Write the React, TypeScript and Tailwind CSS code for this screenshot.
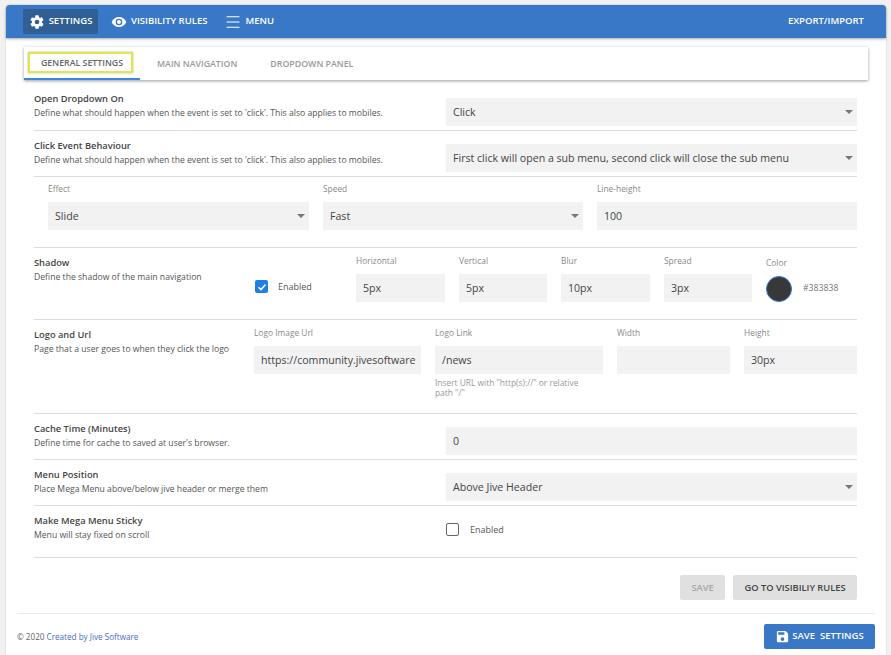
import { Menu } from "lucide-react";

const font = "font-['Open_Sans',sans-serif]";

function Select({ value, className = "" }: { value: string; className?: string }) {
  return (
    <div className={`relative flex h-[28px] items-center bg-[#f2f2f2] pl-[7px] pr-[10px] pt-[2px] text-[10.6px] text-[#444] ${className}`}>
      {value}
      <span className="absolute right-[4px] top-[12px] h-0 w-0 border-x-[4px] border-t-[4px] border-x-transparent border-t-[#777]" />
    </div>
  );
}

function Input({ value = "", className = "" }: { value?: string; className?: string }) {
  return (
    <div className={`flex h-[28px] items-center overflow-hidden whitespace-nowrap bg-[#f2f2f2] pl-[7px] pt-[2px] text-[10.6px] text-[#444] ${className}`}>
      {value}
    </div>
  );
}

function Heading({ title, desc }: { title: string; desc: string }) {
  return (
    <div>
      <div className="text-[9.3px] font-semibold leading-[14px] text-[#444]">{title}</div>
      <div className="text-[8.65px] leading-[14px] text-[#555]">{desc}</div>
    </div>
  );
}

function Label({ children }: { children: string }) {
  return <div className="h-[13px] text-[8.4px] leading-[13px] text-[#8a8a8a]">{children}</div>;
}

function Field({ label, value, className = "" }: { label: string; value?: string; className?: string }) {
  return (
    <div className={className}>
      <Label>{label}</Label>
      <Input value={value} className="mt-[7px]" />
    </div>
  );
}

const clickDesc = "Define what should happen when the event is set to 'click'. This also applies to mobiles.";

export default function App() {
  return (
    <div className={`${font} h-[655px] w-[891px] overflow-hidden bg-[#f1f1f1] pl-[6px] pr-[5px] pt-[5px]`}>
      <div className="h-[650px] rounded-t-[4px] bg-white shadow-[0_0_1px_rgba(0,0,0,0.4)]">
        {/* Top bar */}
        <div className="flex h-[33px] items-center justify-between rounded-t-[4px] bg-[#3878c7] pl-[17px] pr-[22px] text-[9.5px] font-semibold text-white shadow-[0_1px_3px_rgba(0,0,0,0.35)]">
          <div className="flex items-center">
            <div className="flex h-[25px] w-[75px] items-center justify-center gap-[4px] rounded-[2px] bg-[#2f5f94]">
              <svg width="16" height="16" viewBox="0 0 24 24" fill="#fff">
                <path d="M19.4 13c.04-.33.1-.66.1-1s-.06-.67-.1-1l2.1-1.65a.5.5 0 0 0 .12-.64l-2-3.46a.5.5 0 0 0-.6-.22l-2.5 1a7.3 7.3 0 0 0-1.7-1l-.37-2.65A.5.5 0 0 0 14 2h-4a.5.5 0 0 0-.5.42L9.13 5.07c-.6.25-1.17.6-1.7 1l-2.5-1a.5.5 0 0 0-.6.22l-2 3.46a.5.5 0 0 0 .12.64L4.55 11c-.04.33-.05.66-.05 1s.01.67.05 1l-2.1 1.65a.5.5 0 0 0-.12.64l2 3.46c.12.22.38.3.6.22l2.5-1c.53.4 1.1.75 1.7 1l.37 2.65c.04.24.25.42.5.42h4c.25 0 .46-.18.5-.42l.37-2.65c.6-.25 1.17-.6 1.7-1l2.5 1c.22.08.48 0 .6-.22l2-3.46a.5.5 0 0 0-.12-.64zM12 15.5a3.5 3.5 0 1 1 0-7 3.5 3.5 0 0 1 0 7z" />
              </svg>
              SETTINGS
            </div>
            <div className="ml-[13px] flex items-center gap-[4px]">
              <svg width="16" height="16" viewBox="0 0 24 24" fill="#fff">
                <path d="M12 4.5C7 4.5 2.7 7.6 1 12c1.7 4.4 6 7.5 11 7.5s9.3-3.1 11-7.5c-1.7-4.4-6-7.5-11-7.5zM12 17a5 5 0 1 1 0-10 5 5 0 0 1 0 10zm0-8a3 3 0 1 0 0 6 3 3 0 0 0 0-6z" />
              </svg>
              VISIBILITY RULES
            </div>
            <div className="ml-[17px] flex items-center gap-[3px]">
              <Menu size={18} strokeWidth={1.5} />
              MENU
            </div>
          </div>
          <div>EXPORT/IMPORT</div>
        </div>

        {/* Tabs */}
        <div className="ml-[18px] mt-[9px] flex h-[33px] w-[844px] bg-white text-[8.8px] font-semibold text-[#9a9a9a] shadow-[0_1px_3px_rgba(0,0,0,0.4)]">
          <div className="relative flex h-[33px] w-[116px] items-center justify-center border-b-2 border-[#3f86dc] pt-[2px] text-[#666]">
            GENERAL SETTINGS
            <span className="absolute left-[4px] top-[5px] h-[21px] w-[105px] border-2 border-[#e3e64a] shadow-[0_0_2px_rgba(0,0,0,0.3)]" />
          </div>
          <div className="ml-[17px] flex items-center pt-[2px]">MAIN NAVIGATION</div>
          <div className="ml-[33px] flex items-center pt-[2px]">DROPDOWN PANEL</div>
        </div>

        <div className="ml-[28px] mr-[28px] w-[823px]">
          {/* Open dropdown */}
          <div className="flex h-[51px] items-start justify-between border-b border-[#ddd] pt-[12px]">
            <Heading title="Open Dropdown On" desc={clickDesc} />
            <Select value="Click" className="mt-[6px] w-[411px]" />
          </div>
          {/* Click event */}
          <div className="flex h-[46px] items-start justify-between border-b border-[#ddd] pt-[8px]">
            <Heading title="Click Event Behaviour" desc={clickDesc} />
            <Select value="First click will open a sub menu, second click will close the sub menu" className="mt-[5px] w-[411px]" />
          </div>
          {/* Effect */}
          <div className="flex h-[71px] items-start gap-[14px] border-b border-[#ddd] pl-[14px] pt-[5px]">
            <div className="w-[261px]">
              <Label>Effect</Label>
              <Select value="Slide" className="mt-[7px]" />
            </div>
            <div className="w-[260px]">
              <Label>Speed</Label>
              <Select value="Fast" className="mt-[7px]" />
            </div>
            <div className="w-[260px]">
              <Label>Line-height</Label>
              <Input value="100" className="mt-[7px]" />
            </div>
          </div>
          {/* Shadow */}
          <div className="flex h-[72px] items-start border-b border-[#ddd] pt-[6px]">
            <div className="w-[221px] pt-[2px]">
              <Heading title="Shadow" desc="Define the shadow of the main navigation" />
            </div>
            <div className="mt-[26px] flex w-[101px] items-center gap-[10px]">
              <span className="flex h-[13px] w-[13px] items-center justify-center rounded-[2px] bg-[#1f7de6]">
                <svg width="10" height="10" viewBox="0 0 10 10" fill="none" stroke="#fff" strokeWidth="1.5">
                  <path d="M1.5 5.2 4 7.6 8.5 2.4" />
                </svg>
              </span>
              <span className="text-[9px] text-[#555]">Enabled</span>
            </div>
            <div className="flex gap-[14px]">
              <Field label="Horizontal" value="5px" className="w-[89px]" />
              <Field label="Vertical" value="5px" className="w-[88px]" />
              <Field label="Blur" value="10px" className="w-[89px]" />
              <Field label="Spread" value="3px" className="w-[88px]" />
            </div>
            <div className="ml-[14px] pt-[2px]">
              <Label>Color</Label>
              <div className="mt-[7px] flex items-center gap-[11px]">
                <span className="h-[26px] w-[26px] rounded-full border border-[#3878c7] bg-[#383838]" />
                <span className="text-[8.7px] text-[#777]">#383838</span>
              </div>
            </div>
          </div>
          {/* Logo */}
          <div className="flex h-[94px] items-start border-b border-[#ddd] pt-[6px]">
            <div className="w-[220px] pt-[2px]">
              <Heading title="Logo and Url" desc="Page that a user goes to when they click the logo" />
            </div>
            <Field label="Logo Image Url" value="https://community.jivesoftware" className="w-[167px]" />
            <div className="ml-[14px] w-[168px]">
              <Label>Logo Link</Label>
              <Input value="/news" className="mt-[7px]" />
              <div className="mt-[4px] w-[155px] text-[8.4px] leading-[9.5px] text-[#999]">
                Insert URL with "http(s)://" or relative path "/"
              </div>
            </div>
            <Field label="Width" className="ml-[14px] w-[113px]" />
            <Field label="Height" value="30px" className="ml-[14px] w-[113px]" />
          </div>
          {/* Cache */}
          <div className="flex h-[46px] items-start justify-between border-b border-[#ddd] pt-[8px]">
            <Heading title="Cache Time (Minutes)" desc="Define time for cache to saved at user's browser." />
            <Input value="0" className="mt-[5px] w-[411px]" />
          </div>
          {/* Menu position */}
          <div className="flex h-[46px] items-start justify-between border-b border-[#ddd] pt-[8px]">
            <Heading title="Menu Position" desc="Place Mega Menu above/below jive header or merge them" />
            <Select value="Above Jive Header" className="mt-[5px] w-[411px]" />
          </div>
          {/* Sticky */}
          <div className="flex h-[52px] items-start justify-between border-b border-[#ddd] pt-[8px]">
            <Heading title="Make Mega Menu Sticky" desc="Menu will stay fixed on scroll" />
            <div className="mt-[9px] flex w-[411px] items-center gap-[11px]">
              <span className="h-[13px] w-[13px] rounded-[2px] border border-[#666]" />
              <span className="text-[9px] text-[#555]">Enabled</span>
            </div>
          </div>
          {/* Actions */}
          <div className="mt-[17px] flex justify-end gap-[8px] text-[9.3px] font-semibold">
            <div className="flex h-[25px] w-[45px] items-center justify-center rounded-[2px] bg-[#e0e0e0] text-[#a6a6a6]">SAVE</div>
            <div className="flex h-[25px] w-[124px] items-center justify-center rounded-[2px] bg-[#e0e0e0] text-[#444]">GO TO VISIBILIY RULES</div>
          </div>
        </div>

        {/* Footer */}
        <div className="ml-[11px] mt-[13px] flex h-[36px] w-[858px] items-end justify-between border-t border-[#ececec]">
          <div className="mb-[3px] text-[8.15px] leading-[19px] text-[#666]">
            © 2020 <span className="text-[#3f6fc0]">Created by Jive Software</span>
          </div>
          <div className="flex h-[25px] w-[111px] items-center justify-center gap-[2px] rounded-[2px] bg-[#3878c7] text-[9.5px] font-semibold text-white">
            <svg width="15" height="15" viewBox="0 0 24 24" fill="#fff">
              <path d="M17 3H5a2 2 0 0 0-2 2v14a2 2 0 0 0 2 2h14a2 2 0 0 0 2-2V7l-4-4zm-5 16a3 3 0 1 1 0-6 3 3 0 0 1 0 6zm3-10H5V5h10v4z" />
            </svg>
            SAVE&nbsp;&nbsp;SETTINGS
          </div>
        </div>
      </div>
    </div>
  );
}
